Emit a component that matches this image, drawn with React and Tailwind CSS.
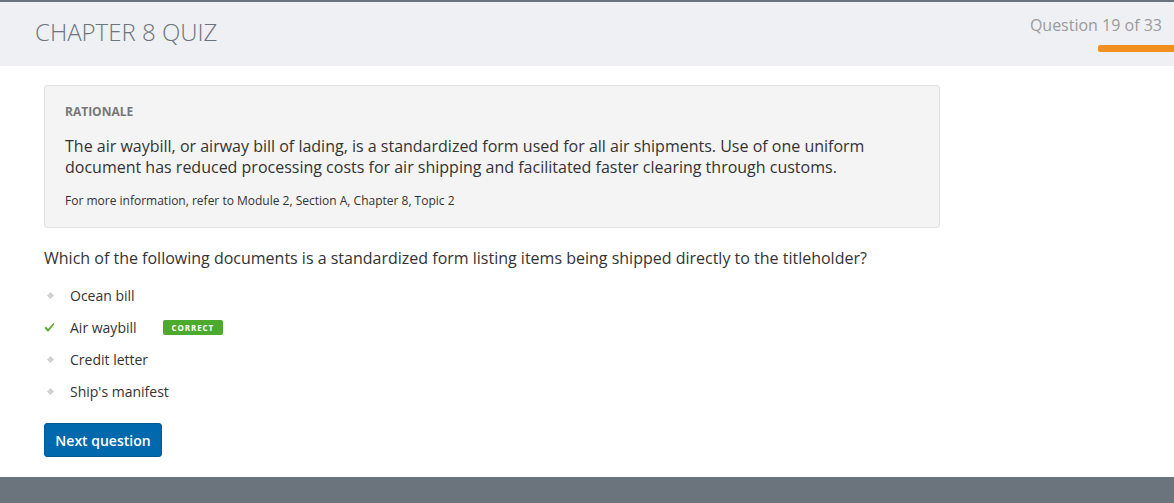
import React from 'react';

const options = [
  { label: 'Ocean bill' },
  { label: 'Air waybill', correct: true },
  { label: 'Credit letter' },
  { label: "Ship's manifest" },
];

const App = () => {
  return (
    <div className="min-h-[503px] flex flex-col bg-white font-['Open_Sans',sans-serif] text-[#333]">
      <header className="border-t-2 border-[#6b737c] bg-[#eff0f4] h-[66px] flex justify-between">
        <h1 className="pl-[35px] pt-[14px] text-[24px] font-light text-[#6b737c] leading-[32px]">CHAPTER 8 QUIZ</h1>
        <div className="flex flex-col items-end pt-[13px]">
          <div className="pr-[12px] text-[16px] text-[#9b9b9b] leading-[20px]">Question 19 of 33</div>
          <div className="mt-[10px] w-[76px] h-[7px] bg-[#f2901d] rounded-l-[2px]"></div>
        </div>
      </header>

      <main className="flex-1 px-[44px] pt-[19px] pb-[20px]">
        <div className="w-[896px] bg-[#f4f4f4] border border-[#e2e2e2] rounded-[3px] px-[20px] pt-[18px] pb-[18px]">
          <div className="text-[12px] font-bold text-[#777] leading-[16px]">RATIONALE</div>
          <p className="mt-[16px] text-[16px] leading-[21px] text-[#333]">
            The air waybill, or airway bill of lading, is a standardized form used for all air shipments. Use of one uniform document has reduced processing costs for air shipping and facilitated faster clearing through customs.
          </p>
          <p className="mt-[15px] text-[12px] leading-[16px] text-[#333]">
            For more information, refer to Module 2, Section A, Chapter 8, Topic 2
          </p>
        </div>

        <p className="mt-[19px] text-[16px] leading-[22px]">
          Which of the following documents is a standardized form listing items being shipped directly to the titleholder?
        </p>

        <ul className="mt-[16px] flex flex-col gap-[12px]">
          {options.map((opt, idx) => (
            <li key={idx} className="flex items-center h-[20px] text-[14px]">
              <span className="w-[26px] flex items-center">
                {opt.correct ? (
                  <svg width="11" height="11" viewBox="0 0 11 11">
                    <path d="M0.5 6 L2 4.5 L4 7 L9.5 1 L10.5 2 L4 10 Z" fill="#5aa82e" />
                  </svg>
                ) : (
                  <span className="ml-[4px] w-[5px] h-[5px] bg-[#d2d2d2] rotate-45 inline-block"></span>
                )}
              </span>
              <span>{opt.label}</span>
              {opt.correct && (
                <span className="ml-[26px] bg-[#4caa2c] text-white text-[8px] font-bold tracking-[0.9px] rounded-[2px] px-[9px] leading-[15px]">
                  CORRECT
                </span>
              )}
            </li>
          ))}
        </ul>

        <button
          type="button"
          className="mt-[22px] w-[118px] h-[34px] bg-[#0068ac] border border-[#005a94] rounded-[3px] text-white text-[14px] font-semibold"
        >
          Next question
        </button>
      </main>

      <footer className="h-[26px] bg-[#6b737c]"></footer>
    </div>
  );
};

export default App;
